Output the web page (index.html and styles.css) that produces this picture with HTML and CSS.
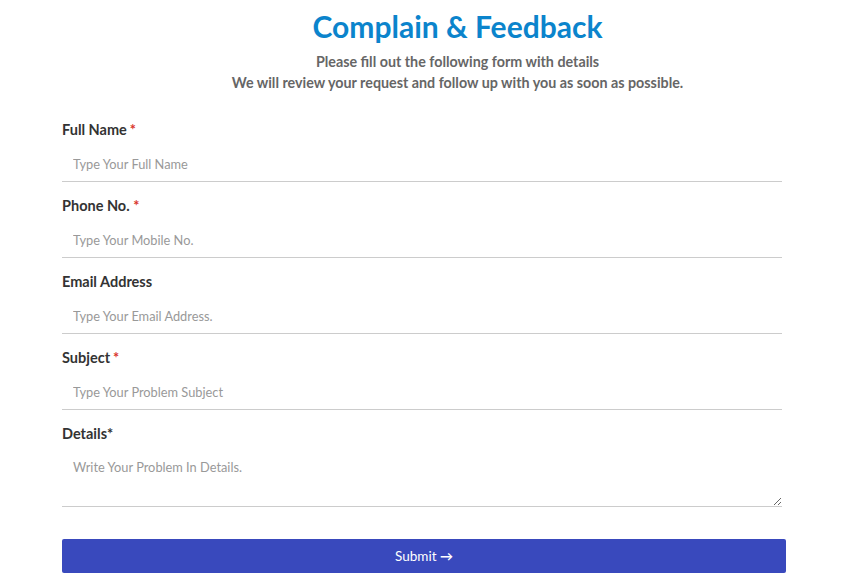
FILE: index.html
```html
<!DOCTYPE html>
<html lang="en">
<head>
<meta charset="utf-8">
<title>Complain &amp; Feedback</title>
<link rel="stylesheet" href="styles.css">
</head>
<body>
<div class="page">
  <header class="head">
    <h1 class="title">Complain &amp; Feedback</h1>
    <p class="sub">Please fill out the following form with details<br>We will review your request and follow up with you as soon as possible.</p>
  </header>
  <form class="form">
    <div class="field">
      <label class="label">Full Name<span class="req">*</span></label>
      <input class="input" type="text" placeholder="Type Your Full Name">
    </div>
    <div class="field">
      <label class="label">Phone No. <span class="req tight">*</span></label>
      <input class="input" type="text" placeholder="Type Your Mobile No.">
    </div>
    <div class="field">
      <label class="label">Email Address</label>
      <input class="input" type="text" placeholder="Type Your Email Address.">
    </div>
    <div class="field">
      <label class="label">Subject<span class="req">*</span></label>
      <input class="input" type="text" placeholder="Type Your Problem Subject">
    </div>
    <div class="field last">
      <label class="label">Details*</label>
      <textarea class="area" placeholder="Write Your Problem In Details."></textarea>
    </div>
    <button class="btn" type="button">Submit <span class="arrow">&#8594;</span></button>
  </form>
</div>
</body>
</html>
```
FILE: styles.css
```css
* { box-sizing: border-box; }
html, body { margin: 0; padding: 0; background: #fff; }
body { font-family: "Trebuchet MS", Lato, "Open Sans", "DejaVu Sans", sans-serif; color: #333; }
.page { padding: 0 4px 0 62px; }
.head { text-align: center; padding-top: 7px; }
.title { margin: 0; font-size: 30px; line-height: 38px; font-weight: 700; color: #0b84cc; }
.sub { margin: 6px 0 0; font-size: 14.3px; line-height: 21px; font-weight: 700; color: #666; }
.form { margin-top: 27px; width: 724px; }
.field { display: flex; flex-direction: column; margin-bottom: 14px; width: 720px; }
.field.last { margin-bottom: 32px; }
.label { font-size: 14.5px; line-height: 20px; font-weight: 700; color: #333; margin-bottom: 6px; }
.req { color: #d9342b; margin-left: 3px; }
.req.tight { margin-left: 0; }
.input, .area {
  font-family: inherit; font-size: 12.8px; color: #333;
  border: 0; border-bottom: 1px solid #ccc; outline: none;
  padding: 0 11px; background: #fff;
}
.input { height: 36px; }
.area { height: 57px; padding-top: 10px; line-height: 15px; resize: vertical; }
.input::placeholder, .area::placeholder { color: #999; }
.btn {
  display: block; width: 724px; height: 34px; border: 0; border-radius: 2px;
  background: #3949bd; color: #fff; font-family: inherit; font-size: 13.5px;
}
.arrow { font-size: 13px; font-weight: 700; }
```
